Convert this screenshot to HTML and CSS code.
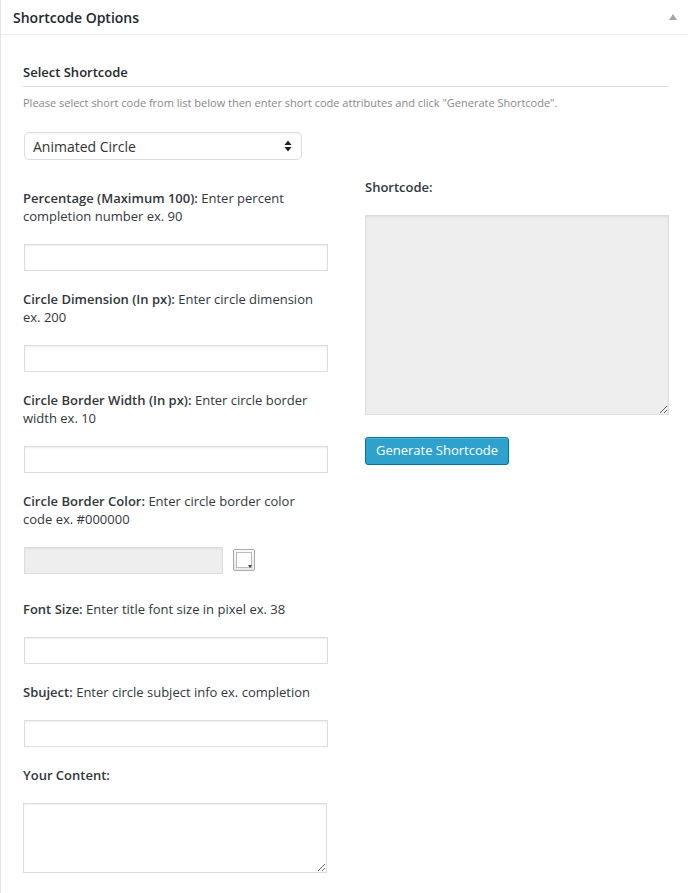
FILE: index.html
```html
<!DOCTYPE html>
<html>
<head>
<meta charset="utf-8">
<link rel="stylesheet" href="styles.css">
</head>
<body>
<div class="panel">
  <div class="panel-head">
    <h2 class="panel-title">Shortcode Options</h2>
    <span class="toggle"></span>
  </div>
  <div class="panel-body">
    <h3 class="section-title">Select Shortcode</h3>
    <p class="desc">Please select short code from list below then enter short code attributes and click "Generate Shortcode".</p>
    <div class="select-wrap">
      <select class="select"><option>Animated Circle</option></select>
      <svg class="select-arrows" width="8" height="12" viewBox="0 0 8 12"><path d="M4 0.5 L7.5 5 L0.5 5 Z" fill="#222"/><path d="M0.5 7 L7.5 7 L4 11.5 Z" fill="#222"/></svg>
    </div>
    <div class="cols">
      <div class="col-left">
        <div class="field">
          <label class="label"><b>Percentage (Maximum 100):</b><span> Enter percent completion number ex. 90</span></label>
          <input class="input" type="text">
        </div>
        <div class="field">
          <label class="label"><b>Circle Dimension (In px):</b><span> Enter circle dimension ex. 200</span></label>
          <input class="input" type="text">
        </div>
        <div class="field">
          <label class="label"><b>Circle Border Width (In px):</b><span> Enter circle border width ex. 10</span></label>
          <input class="input" type="text">
        </div>
        <div class="field field-color">
          <label class="label"><b>Circle Border Color:</b><span> Enter circle border color code ex. #000000</span></label>
          <div class="color-row">
            <input class="input input-color" type="text">
            <span class="picker"><span class="picker-inner"></span><span class="picker-tri"></span></span>
          </div>
        </div>
        <div class="field">
          <label class="label"><b>Font Size:</b><span> Enter title font size in pixel ex. 38</span></label>
          <input class="input" type="text">
        </div>
        <div class="field">
          <label class="label"><b>Sbuject:</b><span> Enter circle subject info ex. completion</span></label>
          <input class="input" type="text">
        </div>
        <div class="field">
          <label class="label"><b>Your Content:</b></label>
          <textarea class="textarea"></textarea>
        </div>
      </div>
      <div class="col-right">
        <label class="label"><b>Shortcode:</b></label>
        <textarea class="textarea code" readonly></textarea>
        <button class="btn">Generate Shortcode</button>
      </div>
    </div>
  </div>
</div>
</body>
</html>
```

FILE: styles.css
```css
html, body {
  margin: 0;
  padding: 0;
  background: #fff;
}
body {
  font-family: "Open Sans", "Liberation Sans", sans-serif;
  color: #444;
}
.panel {
  border-left: 1px solid #e5e5e5;
  min-height: 893px;
  box-sizing: border-box;
}
.panel-head {
  height: 35px;
  border-bottom: 1px solid #eee;
  display: flex;
  align-items: center;
  justify-content: space-between;
  padding: 0 11px 0 12px;
  box-sizing: border-box;
}
.panel-title {
  margin: 0;
  font-size: 14px;
  font-weight: 600;
  color: #23282d;
  line-height: 1;
  padding-top: 1px;
}
.toggle {
  width: 0;
  height: 0;
  border-left: 4px solid transparent;
  border-right: 4px solid transparent;
  border-bottom: 6px solid #a0a5aa;
  margin-top: -1px;
}
.panel-body {
  padding: 28px 19px 0 22px;
}
.section-title {
  margin: 0;
  font-size: 13px;
  font-weight: 600;
  color: #23282d;
  line-height: 18px;
  padding-bottom: 5px;
  border-bottom: 1px solid #ddd;
}
.desc {
  margin: 7px 0 0;
  font-size: 11px;
  line-height: 18px;
  color: #888;
}
.select-wrap {
  position: relative;
  width: 278px;
  margin: 20px 0 0 1px;
}
.select {
  appearance: none;
  -webkit-appearance: none;
  width: 278px;
  height: 28px;
  border: 1px solid #ddd;
  border-radius: 5px;
  background: #fff;
  font-family: "Open Sans", "Liberation Sans", sans-serif;
  font-size: 14px;
  color: #333;
  padding: 0 8px;
  box-shadow: inset 0 1px 2px rgba(0,0,0,0.04);
  display: block;
}
.select-arrows {
  position: absolute;
  right: 10px;
  top: 8px;
}
.cols {
  display: grid;
  grid-template-columns: 306px 304px;
  column-gap: 36px;
  margin-top: 18px;
}
.col-left {
  display: flex;
  flex-direction: column;
  padding-top: 11px;
}
.field {
  display: flex;
  flex-direction: column;
  margin-bottom: 19px;
}
.label {
  display: block;
  width: 300px;
  font-size: 13px;
  line-height: 18px;
  color: #32373c;
  margin-bottom: 19px;
}
.label b {
  font-weight: 600;
}
.input {
  width: 304px;
  height: 27px;
  box-sizing: border-box;
  border: 1px solid #ddd;
  background: #fff;
  box-shadow: inset 0 1px 2px rgba(0,0,0,0.07);
  margin: 0 0 0 1px;
  font-family: "Open Sans", "Liberation Sans", sans-serif;
  font-size: 13px;
}
.field-color {
  margin-bottom: 26px;
}
.color-row {
  display: flex;
  align-items: flex-start;
  gap: 10px;
}
.input-color {
  width: 199px;
  background: #eee;
}
.picker {
  position: relative;
  width: 22px;
  height: 22px;
  box-sizing: border-box;
  border: 1px solid #aaa;
  border-radius: 2px;
  background: linear-gradient(#fafafa, #e8e8e8);
  margin-top: 2px;
}
.picker-inner {
  position: absolute;
  left: 2px;
  top: 2px;
  width: 14px;
  height: 14px;
  background: #fff;
  border: 1px solid #bbb;
}
.picker-tri {
  position: absolute;
  right: 2px;
  bottom: 2px;
  width: 0;
  height: 0;
  border-left: 2px solid transparent;
  border-right: 2px solid transparent;
  border-top: 3px solid #444;
}
.textarea {
  width: 304px;
  height: 70px;
  box-sizing: border-box;
  border: 1px solid #ddd;
  background: #fff;
  box-shadow: inset 0 1px 2px rgba(0,0,0,0.07);
  margin: 0;
  display: block;
}
.col-right {
  display: flex;
  flex-direction: column;
  align-items: flex-start;
}
.code {
  height: 200px;
  background: #eee;
}
.btn {
  margin-top: 22px;
  height: 28px;
  padding: 0 10px 2px;
  background: #2ea2cc;
  border: 1px solid #0074a2;
  border-radius: 3px;
  box-shadow: inset 0 1px 0 rgba(120,200,230,0.5);
  color: #fff;
  font-family: "Open Sans", "Liberation Sans", sans-serif;
  font-size: 13px;
  line-height: 24px;
}
```
